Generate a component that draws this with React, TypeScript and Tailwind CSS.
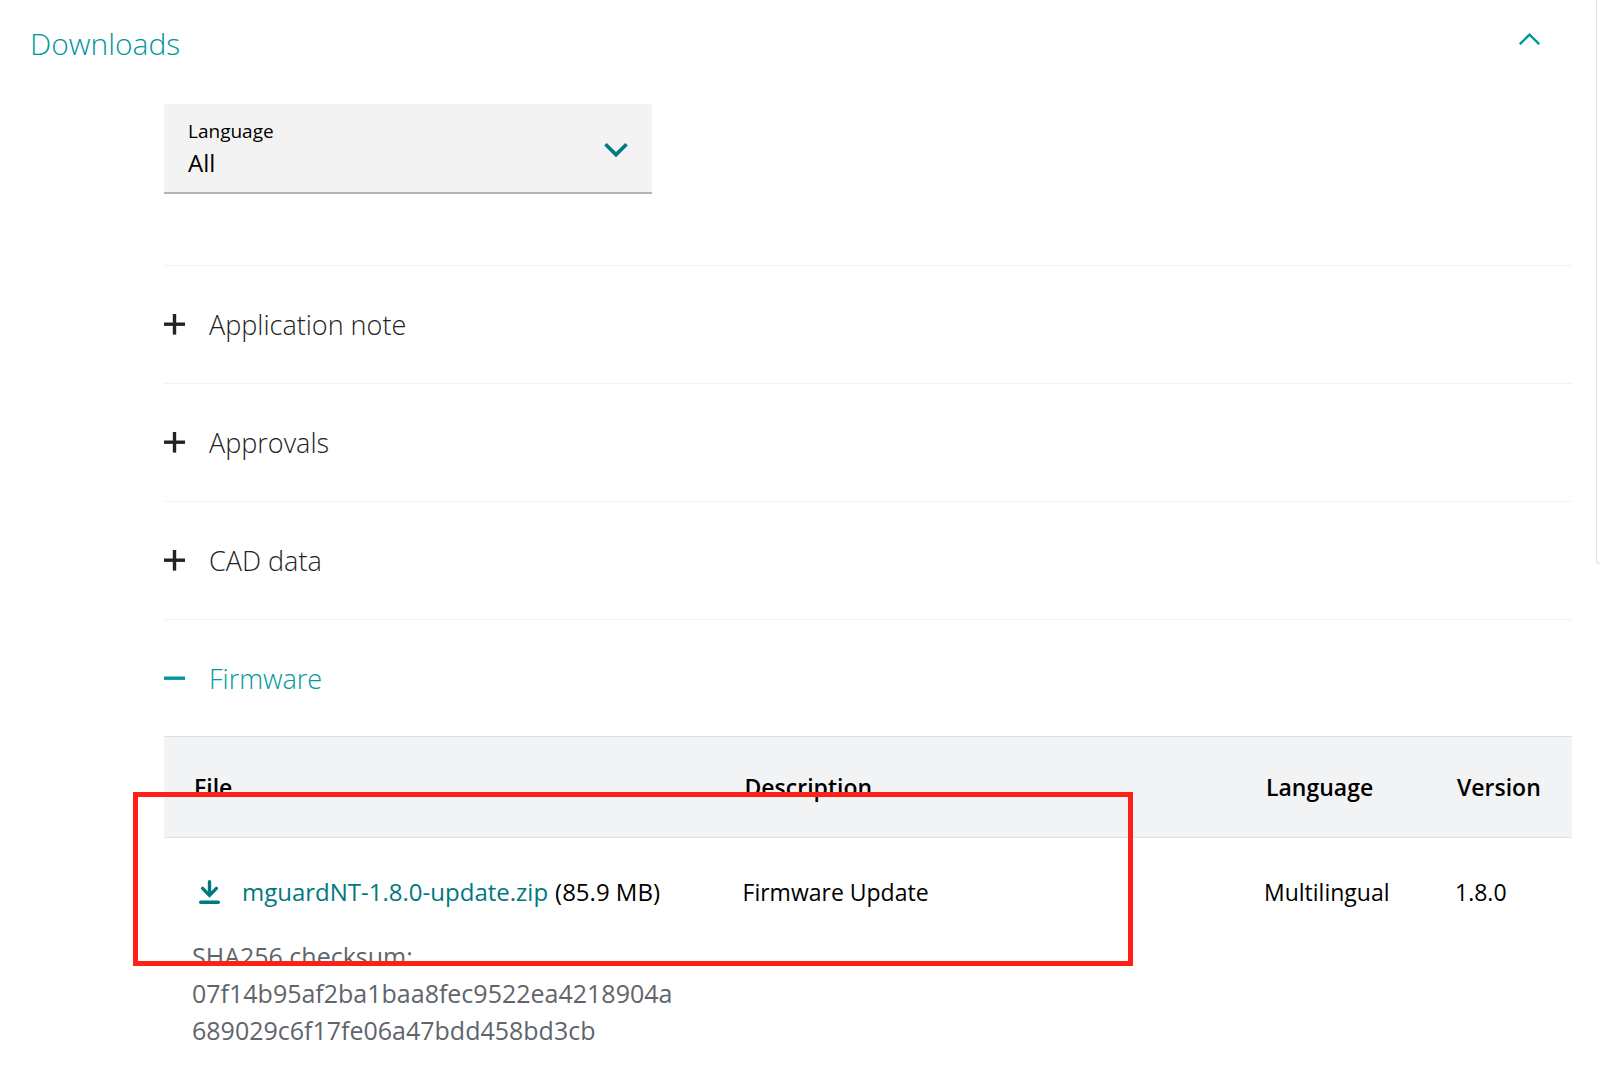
import React, { useState } from "react";

type SectionKey = "application-note" | "approvals" | "cad-data" | "firmware";

const sections: { key: SectionKey; label: string }[] = [
  { key: "application-note", label: "Application note" },
  { key: "approvals", label: "Approvals" },
  { key: "cad-data", label: "CAD data" },
  { key: "firmware", label: "Firmware" },
];

const languages = ["All", "English", "German", "Multilingual"];

function ToggleIcon({ open }: { open: boolean }) {
  return (
    <svg
      className="w-[21px] h-[21px] shrink-0"
      viewBox="0 0 21 21"
      fill="none"
      stroke="currentColor"
      strokeWidth="3.4"
      aria-hidden="true"
    >
      <path d="M0 10.2h21" />
      {!open && <path d="M10.5 0v20.6" />}
    </svg>
  );
}

function DownloadIcon() {
  return (
    <svg
      className="w-[21px] h-6 shrink-0"
      viewBox="0 0 21 24"
      fill="none"
      stroke="currentColor"
      strokeWidth="3.4"
      aria-hidden="true"
    >
      <path d="M10.5 1.8v13" strokeLinecap="round" />
      <path d="M3.6 8.4l6.9 7 6.9-7" strokeLinecap="round" />
      <path d="M1.7 22.2h17.6" strokeLinecap="round" />
    </svg>
  );
}

function FirmwareTable() {
  return (
    <div className="relative -mt-px">
      <table className="w-full table-fixed border-collapse text-left text-[23px] leading-9">
        <colgroup>
          <col className="w-[39.1%]" />
          <col />
          <col className="w-[191px]" />
          <col className="w-[145px]" />
        </colgroup>
        <thead>
          <tr className="h-[101px] bg-[#f2f3f5] border-y border-[#dcdfe4]">
            <th className="pl-[30px] font-semibold">File</th>
            <th className="pl-[30px] font-semibold">Description</th>
            <th className="pl-[30px] font-semibold">Language</th>
            <th className="pl-[30px] font-semibold">Version</th>
          </tr>
        </thead>
        <tbody>
          <tr className="align-top">
            <td className="pt-9 pl-7">
              <div className="flex items-center whitespace-nowrap text-2xl leading-9">
                <a href="#download" className="flex items-center gap-[22px] pl-[7px] text-[#00797f]">
                  <DownloadIcon />
                  mguardNT-1.8.0-update.zip
                </a>
                <span className="pl-[7px]">(85.9 MB)</span>
              </div>
              <p className="mt-7 text-[25px] leading-[37px] text-[#60656b]">
                SHA256 checksum:
                <br />
                07f14b95af2ba1baa8fec9522ea4218904a
                <br />
                689029c6f17fe06a47bdd458bd3cb
              </p>
            </td>
            <td className="pt-9 pl-7">Firmware Update</td>
            <td className="pt-9 pl-7">Multilingual</td>
            <td className="pt-9 pl-7">1.8.0</td>
          </tr>
        </tbody>
      </table>

      {/* Highlight frame over the firmware row */}
      <div className="pointer-events-none absolute top-14 -left-[31px] w-[1000px] h-[174px] border-[5px] border-[#ff2017]" />
    </div>
  );
}

export default function App() {
  const [expanded, setExpanded] = useState(true);
  const [openSection, setOpenSection] = useState<SectionKey | null>("firmware");
  const [language, setLanguage] = useState("All");

  return (
    <div className="flex items-start min-h-screen bg-white text-black font-['Open_Sans',sans-serif]">
      <main className="flex-1 min-w-0 pr-6">
        <h2>
          <button
            type="button"
            aria-expanded={expanded}
            onClick={() => setExpanded(!expanded)}
            className="flex w-full items-center justify-between h-[86px] pl-[30px] pr-8 text-left text-[30px] font-light text-[#00979d]"
          >
            Downloads
            <svg
              className={`w-[21px] h-3 mb-2 ${expanded ? "" : "rotate-180"}`}
              viewBox="0 0 21 12"
              fill="none"
              stroke="currentColor"
              strokeWidth="2.4"
              aria-hidden="true"
            >
              <path d="M0.8 11.2L10.5 1.6l9.7 9.6" />
            </svg>
          </button>
        </h2>

        {expanded && (
          <div className="pt-[18px] pl-[164px]">
            <div className="relative w-[488px] max-w-full h-[90px] pt-[13px] bg-[#f3f3f3] border-b-2 border-[#b3b3b3]">
              <label htmlFor="language" className="block pl-6 text-[19px] leading-7">
                Language
              </label>
              <select
                id="language"
                value={language}
                onChange={(e) => setLanguage(e.target.value)}
                className="block w-full appearance-none bg-transparent pl-6 text-2xl leading-9"
              >
                {languages.map((item) => (
                  <option key={item} value={item}>
                    {item}
                  </option>
                ))}
              </select>
              <svg
                className="pointer-events-none absolute top-[38px] right-6 w-6 h-4 text-[#007b81]"
                viewBox="0 0 24 16"
                fill="none"
                stroke="currentColor"
                strokeWidth="3.6"
                strokeLinejoin="miter"
                aria-hidden="true"
              >
                <path d="M1.5 2.2L12 12.6 22.5 2.2" />
              </svg>
            </div>

            <div className="mt-[71px]">
              {sections.map((section) => {
                const open = openSection === section.key;
                return (
                  <section key={section.key} className="border-t border-[#f1f4f4]">
                    <h3>
                      <button
                        type="button"
                        aria-expanded={open}
                        onClick={() => setOpenSection(open ? null : section.key)}
                        className={`flex w-full items-center gap-6 h-[117px] text-left text-[27px] font-light ${
                          open ? "text-[#00979d]" : "text-[#222222]"
                        }`}
                      >
                        <ToggleIcon open={open} />
                        <span className="pt-0.5">{section.label}</span>
                      </button>
                    </h3>
                    {open && section.key === "firmware" && <FirmwareTable />}
                  </section>
                );
              })}
            </div>
          </div>
        )}
      </main>

      {/* Edge of the neighbouring panel */}
      <aside className="w-1 h-[564px] shrink-0 border-l border-b-2 border-l-[#dde1e8] border-b-[#eceef2]" />
    </div>
  );
}
